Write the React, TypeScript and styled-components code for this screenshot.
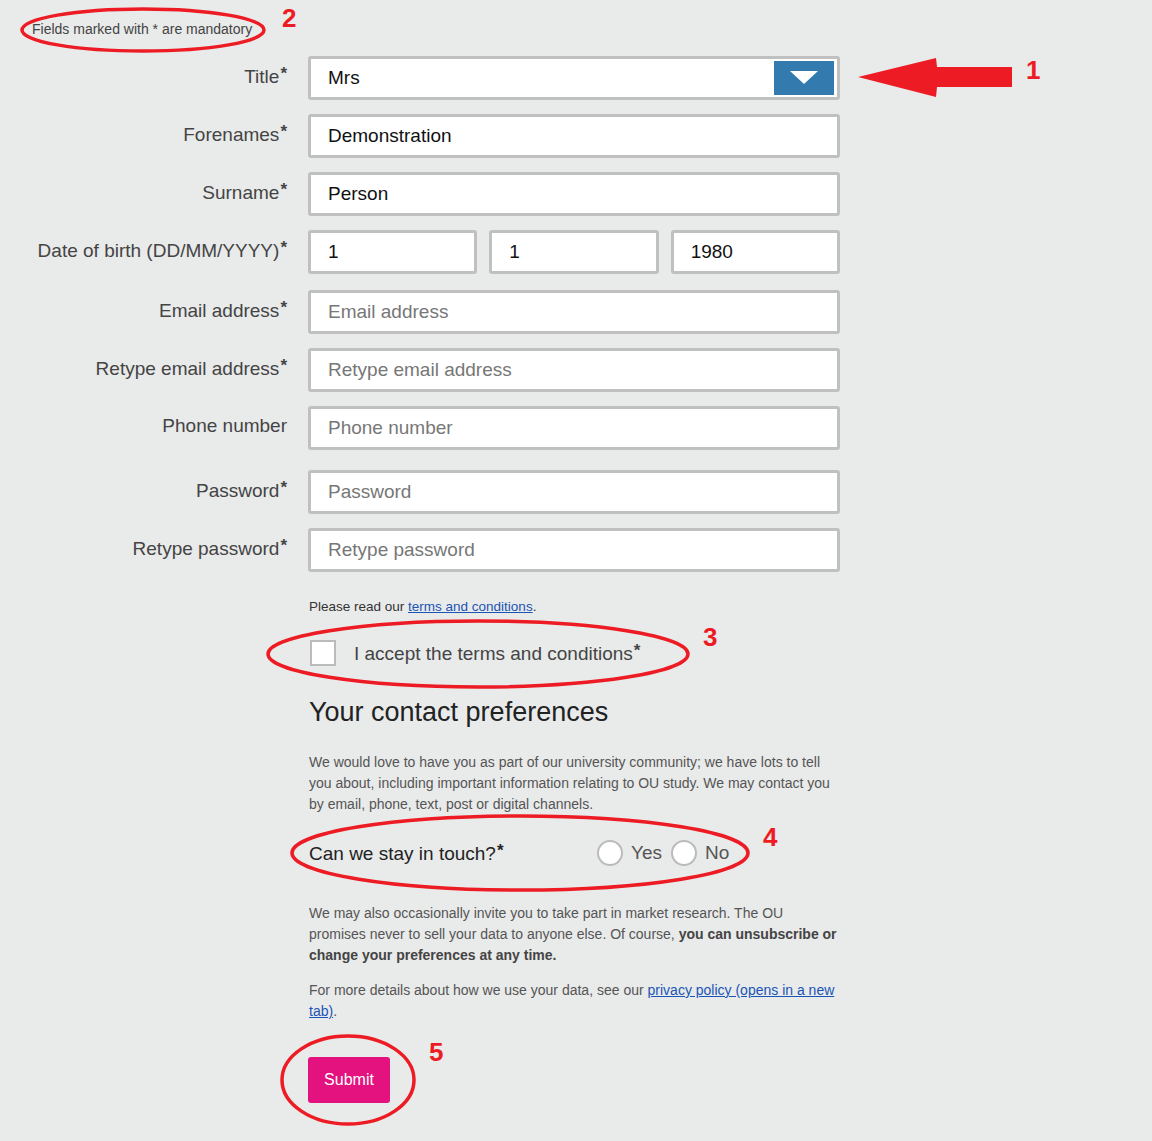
import React from "react";
import styled, { createGlobalStyle } from "styled-components";

const GlobalStyle = createGlobalStyle`
  html, body {
    margin: 0;
    padding: 0;
    background: #e9eaea;
  }
  body {
    font-family: "Liberation Sans", Arial, sans-serif;
    color: #333;
  }
  * { box-sizing: border-box; }
`;

const RED = "#ed1c24";

const Page = styled.div`
  position: relative;
  width: 1152px;
  min-height: 1141px;
  background: #e9eaea;
  padding-top: 21px;
`;

const MandatoryNote = styled.div`
  font-size: 14px;
  color: #444;
  padding-left: 32px;
  height: 35px;
`;

const FormGrid = styled.div`
  display: grid;
  grid-template-columns: 287px 532px;
  column-gap: 21px;
`;

const Label = styled.label<{ $gap?: number }>`
  font-size: 19px;
  color: #444;
  text-align: right;
  align-self: center;
  margin-bottom: ${p => p.$gap ?? 14}px;
  margin-top: -4px;
  white-space: nowrap;
`;

const Star = styled.span`
  font-weight: bold;
  font-size: 17px;
  vertical-align: 4px;
  margin-left: 1px;
`;

const FieldBox = styled.div<{ $gap?: number }>`
  height: 44px;
  margin-bottom: ${p => p.$gap ?? 14}px;
  display: flex;
  gap: 12px;
`;

const TextBox = styled.div<{ $placeholder?: boolean }>`
  flex: 1;
  height: 44px;
  background: #fff;
  border: 3px solid #c0c0c0;
  border-radius: 3px;
  padding-left: 17px;
  display: flex;
  align-items: center;
  font-size: 19px;
  color: ${p => (p.$placeholder ? "#777" : "#111")};
`;

const SelectBox = styled(TextBox)`
  justify-content: space-between;
  padding-right: 3px;
`;

const DropButton = styled.div`
  width: 60px;
  height: 34px;
  background: #337aae;
  display: flex;
  align-items: center;
  justify-content: center;
`;

const Column = styled.div`
  margin-left: 308px;
  width: 532px;
`;

const SmallText = styled.p`
  font-size: 13.5px;
  color: #333;
  margin: 27px 0 0 1px;
`;

const Link = styled.a`
  color: #1a55b5;
  text-decoration: underline;
`;

const CheckRow = styled.div`
  display: flex;
  align-items: center;
  margin-top: 26px;
  margin-left: 2px;
  gap: 18px;
  font-size: 19px;
  color: #444;
`;

const CheckBox = styled.span`
  width: 26px;
  height: 26px;
  background: #fff;
  border: 2px solid #bbb;
`;

const Heading = styled.h2`
  font-size: 27px;
  font-weight: normal;
  color: #222;
  margin: 30px 0 0 1px;
  line-height: 32px;
`;

const Paragraph = styled.p<{ $top: number }>`
  font-size: 14px;
  line-height: 21px;
  color: #555;
  margin: ${p => p.$top}px 0 0 1px;
  width: 532px;
  b { color: #444; }
`;

const StayRow = styled.div`
  display: flex;
  align-items: center;
  margin: 25px 0 0 1px;
  font-size: 19px;
  color: #222;
`;

const StayLabel = styled.span`
  width: 288px;
`;

const RadioOption = styled.label`
  display: flex;
  align-items: center;
  gap: 8px;
  margin-right: 9px;
  color: #555;
`;

const RadioCircle = styled.span`
  width: 26px;
  height: 26px;
  border-radius: 50%;
  background: #fff;
  border: 2px solid #bbb;
`;

const SubmitButton = styled.button`
  margin-top: 35px;
  width: 82px;
  height: 46px;
  border: none;
  border-radius: 3px;
  background: #e4127f;
  color: #fff;
  font-family: "Liberation Sans", Arial, sans-serif;
  font-size: 16px;
`;

const Overlay = styled.svg`
  position: absolute;
  left: 0;
  top: 0;
  pointer-events: none;
`;

const Num = styled.text`
  fill: ${RED};
  font-family: "Liberation Sans", Arial, sans-serif;
  font-weight: bold;
  font-size: 26px;
`;

const Req = () => <Star>*</Star>;

const Triangle = () => (
  <svg width="28" height="14" viewBox="0 0 28 14">
    <polygon points="0,0 28,0 14,13" fill="#fff" />
  </svg>
);

type Row = { label: string; req?: boolean; value: string; placeholder?: boolean; gap?: number };

const rows: Row[] = [
  { label: "Email address", req: true, value: "Email address", placeholder: true },
  { label: "Retype email address", req: true, value: "Retype email address", placeholder: true },
  { label: "Phone number", value: "Phone number", placeholder: true, gap: 20 },
  { label: "Password", req: true, value: "Password", placeholder: true },
  { label: "Retype password", req: true, value: "Retype password", placeholder: true, gap: 0 },
];

export default function App() {
  return (
    <Page>
      <GlobalStyle />
      <MandatoryNote>Fields marked with * are mandatory</MandatoryNote>
      <FormGrid>
        <Label>Title<Req /></Label>
        <FieldBox>
          <SelectBox>
            Mrs
            <DropButton><Triangle /></DropButton>
          </SelectBox>
        </FieldBox>

        <Label>Forenames<Req /></Label>
        <FieldBox><TextBox>Demonstration</TextBox></FieldBox>

        <Label>Surname<Req /></Label>
        <FieldBox><TextBox>Person</TextBox></FieldBox>

        <Label $gap={16}>Date of birth (DD/MM/YYYY)<Req /></Label>
        <FieldBox $gap={16}>
          <TextBox>1</TextBox>
          <TextBox>1</TextBox>
          <TextBox>1980</TextBox>
        </FieldBox>

        {rows.map(r => (
          <React.Fragment key={r.label}>
            <Label $gap={r.gap}>{r.label}{r.req && <Req />}</Label>
            <FieldBox $gap={r.gap}>
              <TextBox $placeholder={r.placeholder}>{r.value}</TextBox>
            </FieldBox>
          </React.Fragment>
        ))}
      </FormGrid>

      <Column>
        <SmallText>
          Please read our <Link href="#">terms and conditions</Link>.
        </SmallText>
        <CheckRow>
          <CheckBox />
          <span>I accept the terms and conditions<Req /></span>
        </CheckRow>

        <Heading>Your contact preferences</Heading>
        <Paragraph $top={24}>
          We would love to have you as part of our university community; we have lots to tell
          you about, including important information relating to OU study. We may contact you
          by email, phone, text, post or digital channels.
        </Paragraph>

        <StayRow>
          <StayLabel>Can we stay in touch?<Req /></StayLabel>
          <RadioOption><RadioCircle />Yes</RadioOption>
          <RadioOption><RadioCircle />No</RadioOption>
        </StayRow>

        <Paragraph $top={37}>
          We may also occasionally invite you to take part in market research. The OU
          promises never to sell your data to anyone else. Of course, <b>you can unsubscribe or
          change your preferences at any time.</b>
        </Paragraph>
        <Paragraph $top={14}>
          For more details about how we use your data, see our{" "}
          <Link href="#">privacy policy (opens in a new tab)</Link>.
        </Paragraph>

        <SubmitButton>Submit</SubmitButton>
      </Column>

      <Overlay width="1152" height="1141" viewBox="0 0 1152 1141">
        <g fill="none" stroke={RED} strokeWidth="3.5">
          <ellipse cx="143" cy="30" rx="121" ry="21" />
          <ellipse cx="478" cy="654" rx="210" ry="33" />
          <ellipse cx="520" cy="853" rx="228" ry="37" />
          <ellipse cx="348" cy="1080" rx="66" ry="44" />
        </g>
        <polygon
          points="858,77 936,58 937,67 1012,67 1012,87 937,87 936,97"
          fill={RED}
        />
        <Num x="282" y="27">2</Num>
        <Num x="1026" y="79">1</Num>
        <Num x="703" y="646">3</Num>
        <Num x="763" y="846">4</Num>
        <Num x="429" y="1061">5</Num>
      </Overlay>
    </Page>
  );
}
